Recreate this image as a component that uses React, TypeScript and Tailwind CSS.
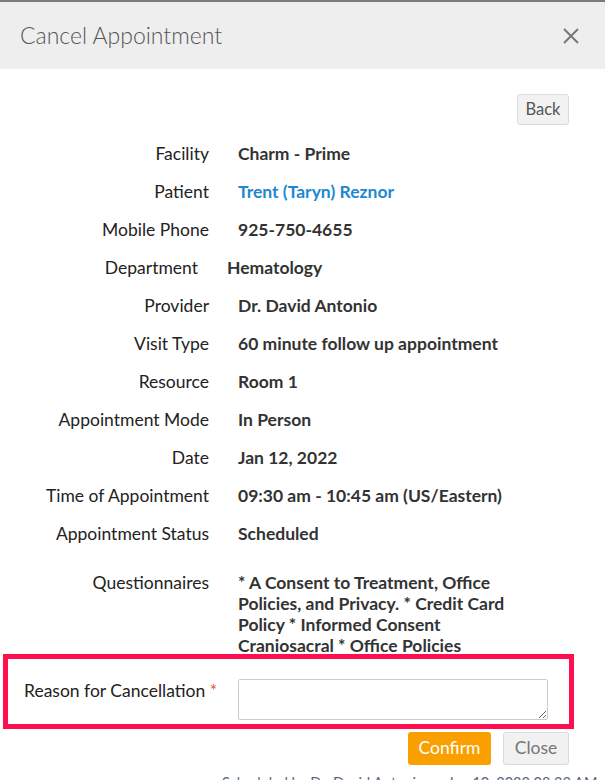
import React from "react";

const rows: { label: string; value: string; link?: boolean; shift?: boolean }[] = [
  { label: "Facility", value: "Charm - Prime" },
  { label: "Patient", value: "Trent (Taryn) Reznor", link: true },
  { label: "Mobile Phone", value: "925-750-4655" },
  { label: "Department", value: "Hematology", shift: true },
  { label: "Provider", value: "Dr. David Antonio" },
  { label: "Visit Type", value: "60 minute follow up appointment" },
  { label: "Resource", value: "Room 1" },
  { label: "Appointment Mode", value: "In Person" },
  { label: "Date", value: "Jan 12, 2022" },
  { label: "Time of Appointment", value: "09:30 am - 10:45 am (US/Eastern)" },
  { label: "Appointment Status", value: "Scheduled" },
];

function InfoRow({ label, value, link, shift }: (typeof rows)[number]) {
  return (
    <div className="flex h-[38px] items-center">
      <div className={`shrink-0 pr-[29px] text-right ${shift ? "w-[227px]" : "w-[238px]"}`}>{label}</div>
      <div className={`font-bold ${link ? "text-[#1e88d0]" : "text-[#333]"}`}>{value}</div>
    </div>
  );
}

export default function App() {
  return (
    <div
      className="h-[780px] w-[605px] overflow-hidden bg-white text-[17.5px] text-[#222]"
      style={{ fontFamily: "Lato, 'Open Sans', sans-serif" }}
    >
      <div className="h-[2px] bg-[#7a7a7a]" />
      <header className="flex h-[67px] items-center justify-between bg-[#eeeeee] pl-[20px] pr-[26px]">
        <h2 className="text-[23px] font-light text-[#555]">Cancel Appointment</h2>
        <svg viewBox="0 0 16 16" className="h-[16px] w-[16px]" stroke="#777" strokeWidth="2" fill="none">
          <path d="M1 1l14 14M15 1L1 15" />
        </svg>
      </header>

      <div className="pr-[36px]">
        <div className="flex justify-end pt-[25px]">
          <button className="h-[31px] w-[52px] rounded-[3px] border border-[#dcdcdc] bg-[#f2f2f2] text-[16.5px] text-[#555]">
            Back
          </button>
        </div>

        <div className="mt-[10px]">
          {rows.map((r) => (
            <InfoRow key={r.label} {...r} />
          ))}
          <div className="mt-[19px] flex leading-[21px]">
            <div className="w-[238px] shrink-0 pr-[29px] text-right">Questionnaires</div>
            <div className="w-[285px] font-bold text-[#333]">
              * A Consent to Treatment, Office Policies, and Privacy. * Credit Card Policy * Informed Consent
              Craniosacral * Office Policies
            </div>
          </div>
        </div>
      </div>

      <div className="relative -mt-[2px] ml-[3px] flex h-[75px] w-[571px] border-[5px] border-[#ff0f4f] bg-white pl-[16px] pt-[19px]">
        <div className="w-[214px] shrink-0">
          Reason for Cancellation <span className="text-[#e8562a]">*</span>
        </div>
        <textarea className="mt-[1px] h-[41px] w-[310px] rounded-[2px] border border-[#ccc] outline-none" />
      </div>

      <div className="flex justify-end gap-[12px] pr-[36px] pt-[3px]">
        <button className="h-[33px] w-[83px] rounded-[3px] bg-[#f9a000] text-[17.5px] text-white">Confirm</button>
        <button className="h-[33px] w-[66px] rounded-[3px] border border-[#dcdcdc] bg-[#f1f1f1] text-[17.5px] text-[#777]">
          Close
        </button>
      </div>
      <div className="pl-[222px] pt-[7px] text-[14.5px] text-[#556a88]">
        Scheduled by Dr. David Antonio on Jan 10, 2022 08:32 AM
      </div>
    </div>
  );
}
